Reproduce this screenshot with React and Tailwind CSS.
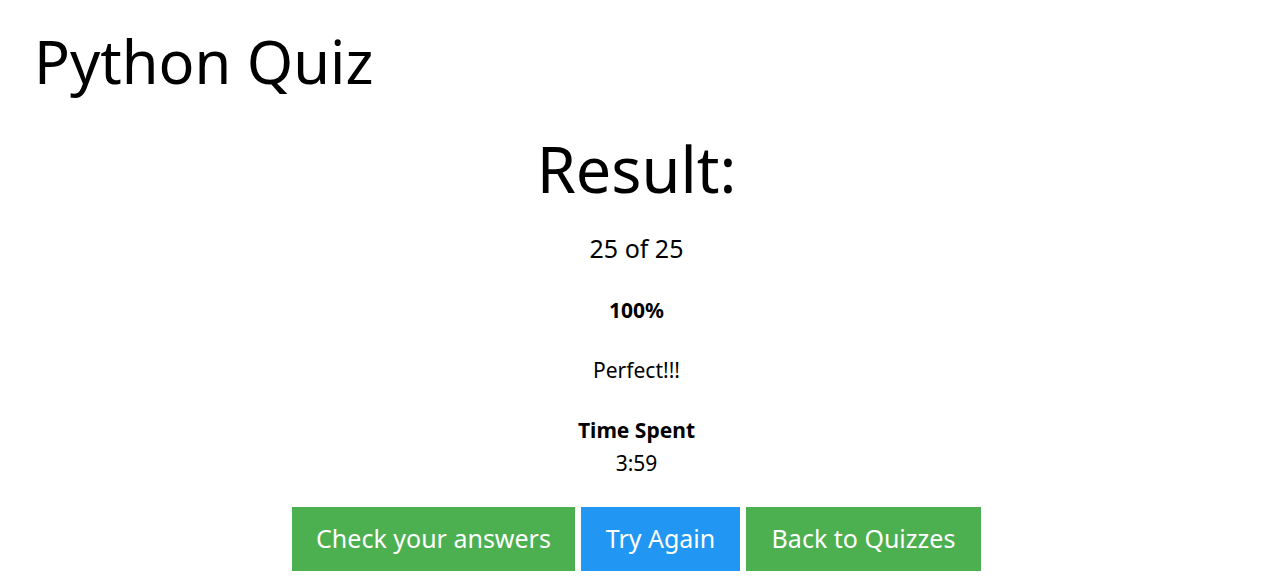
export default function App() {
  return (
    <div className="min-h-screen bg-white text-black" style={{ fontFamily: '"Noto Sans", "Open Sans", sans-serif' }}>
      <h1 className="pl-[34px] pt-[21px] text-[59.5px] leading-[80px] font-normal">Python Quiz</h1>

      <div className="flex flex-col items-center pl-[12px]">
        <h2 className="mt-[27px] text-[63px] leading-[82px] font-normal">Result:</h2>
        <p className="mt-[22px] text-[25px] leading-[32px]">25 of 25</p>
        <p className="mt-[30px] text-[21px] leading-[32px] font-bold">100%</p>
        <p className="mt-[28px] text-[21px] leading-[32px]">Perfect!!!</p>
        <p className="mt-[28px] text-[21px] leading-[32px] font-bold">Time Spent</p>
        <p className="mt-[1px] text-[21px] leading-[32px]">3:59</p>

        <div className="mt-[28px] flex gap-[6px]">
          <button className="h-[64px] w-[283px] bg-[#4caf50] text-[25px] text-white">Check your answers</button>
          <button className="h-[64px] w-[159px] bg-[#2196f3] text-[25px] text-white">Try Again</button>
          <button className="h-[64px] w-[235px] bg-[#4caf50] text-[25px] text-white">Back to Quizzes</button>
        </div>
      </div>
    </div>
  );
}
